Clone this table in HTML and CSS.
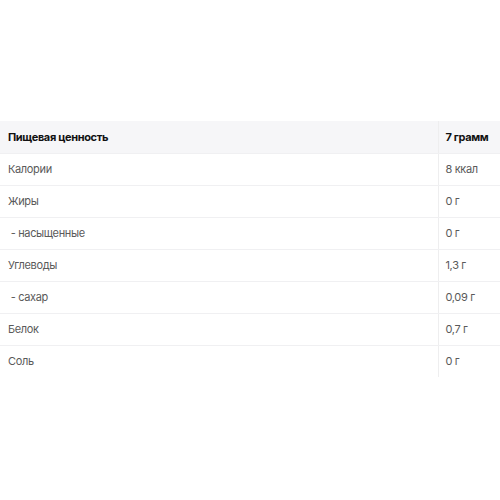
FILE: index.html
```html
<!DOCTYPE html>
<html lang="ru">
<head>
<meta charset="utf-8">
<link rel="stylesheet" href="styles.css">
</head>
<body>
<div class="page">
<table class="nutrition">
  <thead>
    <tr><th class="name">Пищевая ценность</th><th class="val">7 грамм</th></tr>
  </thead>
  <tbody>
    <tr><td class="name">Калории</td><td class="val">8 ккал</td></tr>
    <tr><td class="name">Жиры</td><td class="val">0 г</td></tr>
    <tr><td class="name">&nbsp;- насыщенные</td><td class="val">0 г</td></tr>
    <tr><td class="name">Углеводы</td><td class="val">1,3 г</td></tr>
    <tr><td class="name">&nbsp;- сахар</td><td class="val">0,09 г</td></tr>
    <tr><td class="name">Белок</td><td class="val">0,7 г</td></tr>
    <tr><td class="name">Соль</td><td class="val">0 г</td></tr>
  </tbody>
</table>
</div>
</body>
</html>
```
FILE: styles.css
```css
html, body {
  margin: 0;
  padding: 0;
  background: #fff;
}
.page {
  padding-top: 121px;
}
.nutrition {
  width: 500px;
  border-collapse: collapse;
  font-family: Inter, "Noto Sans", sans-serif;
  font-size: 11px;
  letter-spacing: -0.35px;
  color: #5a5a5a;
}
.nutrition th, .nutrition td {
  height: 32px;
  padding: 0 8px;
  text-align: left;
  vertical-align: middle;
  box-sizing: border-box;
  border-bottom: 1px solid #f0f0f2;
}
.nutrition th {
  background: #f6f6f8;
  color: #111;
  font-weight: 700;
}
.nutrition .val {
  width: 62px;
  border-left: 1px solid #eeeeef;
  padding-left: 7px;
}
.nutrition tr:last-child td {
  border-bottom: none;
}
```
